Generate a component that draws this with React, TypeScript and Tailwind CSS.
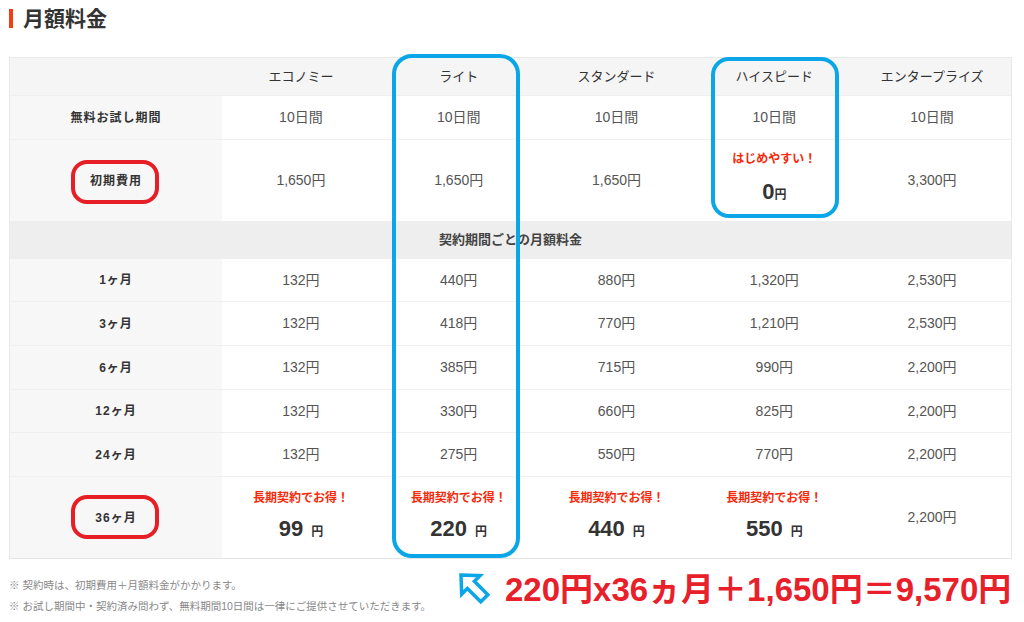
import React from "react";

const plans = ["エコノミー", "ライト", "スタンダード", "ハイスピード", "エンタープライズ"];
const monthly: [string, string[]][] = [
  ["1ヶ月", ["132円", "440円", "880円", "1,320円", "2,530円"]],
  ["3ヶ月", ["132円", "418円", "770円", "1,210円", "2,530円"]],
  ["6ヶ月", ["132円", "385円", "715円", "990円", "2,200円"]],
  ["12ヶ月", ["132円", "330円", "660円", "825円", "2,200円"]],
  ["24ヶ月", ["132円", "275円", "550円", "770円", "2,200円"]],
];
const heights = ["h-[43px]", "h-[44px]", "h-[44px]", "h-[43px]", "h-[44px]"];

const rowGrid = "grid grid-cols-[212px_repeat(5,minmax(0,1fr))] border-b border-[#efefef]";
const labelCell = "flex items-center justify-center bg-[#f7f7f7] text-[12px] font-bold text-[#333] tracking-[1px]";
const dataCell = "flex items-center justify-center bg-white text-[14px] text-[#555]";

function Deal({ price }: { price: string }) {
  return (
    <div className="flex flex-col items-center gap-[10px]">
      <div className="text-[12px] font-bold leading-[16px] text-[#f52a0a]">長期契約でお得！</div>
      <div className="flex items-baseline leading-[26px] text-[#333]">
        <span className="text-[22px] font-bold">{price}</span>
        <span className="ml-[8px] text-[12px] font-bold">円</span>
      </div>
    </div>
  );
}

export default function App() {
  return (
    <div className="relative w-[1024px] h-[622px] overflow-hidden bg-white font-[Liberation_Sans,Noto_Sans_CJK_JP,sans-serif]">
      <div className="flex items-center pl-[9px] pt-[8px] h-[28px]">
        <div className="w-[4px] h-[19px] bg-[#f33d12]" />
        <div className="ml-[10px] text-[21px] font-bold leading-[21px] text-[#333]">月額料金</div>
      </div>

      <div className="ml-[9px] mt-[29px] w-[1003px] border border-[#e8e8e8] border-b-[#e4e4e4]">
        {/* header */}
        <div className={`${rowGrid} h-[38px] bg-[#f5f5f5]`}>
          <div />
          {plans.map((p) => (
            <div key={p} className="flex items-center justify-center text-[13px] text-[#333]">
              {p}
            </div>
          ))}
        </div>
        {/* trial */}
        <div className={`${rowGrid} h-[44px]`}>
          <div className={labelCell}>無料お試し期間</div>
          {plans.map((p) => (
            <div key={p} className={dataCell}>10日間</div>
          ))}
        </div>
        {/* initial */}
        <div className={`${rowGrid} h-[81px] border-b-0`}>
          <div className={labelCell}>初期費用</div>
          <div className={dataCell}>1,650円</div>
          <div className={dataCell}>1,650円</div>
          <div className={dataCell}>1,650円</div>
          <div className={dataCell}>
            <div className="flex flex-col items-center gap-[12px] -mt-[2px]">
              <div className="text-[12px] font-bold leading-[16px] text-[#f52a0a]">はじめやすい！</div>
              <div className="flex items-baseline leading-[26px] text-[#333]">
                <span className="text-[22px] font-bold">0</span>
                <span className="text-[12px] font-bold">円</span>
              </div>
            </div>
          </div>
          <div className={dataCell}>3,300円</div>
        </div>
        {/* section */}
        <div className="flex h-[38px] items-center justify-center bg-[#eeeeee] text-[13px] font-semibold text-[#444]">
          契約期間ごとの月額料金
        </div>
        {monthly.map(([label, vals], i) => (
          <div key={label} className={`${rowGrid} ${heights[i]}`}>
            <div className={labelCell}>{label}</div>
            {vals.map((v, j) => (
              <div key={j} className={dataCell}>{v}</div>
            ))}
          </div>
        ))}
        {/* 36 months */}
        <div className={`${rowGrid} h-[81px] border-b-0`}>
          <div className={labelCell}>36ヶ月</div>
          <div className={dataCell}><Deal price="99" /></div>
          <div className={dataCell}><Deal price="220" /></div>
          <div className={dataCell}><Deal price="440" /></div>
          <div className={dataCell}><Deal price="550" /></div>
          <div className={dataCell}>2,200円</div>
        </div>
      </div>

      {/* bottom area */}
      <div className="flex items-start pl-[9px] mt-[16px]">
        <div className="w-[440px] text-[10.5px] leading-[21px] text-[#888]">
          <div>※ 契約時は、初期費用＋月額料金がかかります。</div>
          <div>※ お試し期間中・契約済み問わず、無料期間10日間は一律にご提供させていただきます。</div>
        </div>
        <svg width="40" height="40" viewBox="0 0 40 40" className="ml-[4px] -mt-[8px]">
          <g transform="rotate(-45 20 20)">
            <polygon
              points="20,3 33,17 25,17 25,36 15,36 15,17 7,17"
              fill="white"
              stroke="#0aa6e8"
              strokeWidth="3.5"
              strokeLinejoin="miter"
            />
          </g>
        </svg>
        <div className="ml-[12px] -mt-[3px] text-[33px] font-bold leading-[36px] text-[#e8202a] whitespace-nowrap">
          220円x36ヵ月＋1,650円＝9,570円
        </div>
      </div>

      {/* overlays */}
      <div className="absolute left-[392px] top-[54px] w-[128px] h-[504px] rounded-[20px] border-[4px] border-[#0aa6e8]" />
      <div className="absolute left-[711px] top-[57px] w-[128px] h-[161px] rounded-[18px] border-[4px] border-[#0aa6e8]" />
      <div className="absolute left-[71px] top-[160px] w-[88px] h-[44px] rounded-[16px] border-[4px] border-[#e61e25]" />
      <div className="absolute left-[71px] top-[495px] w-[88px] h-[44px] rounded-[16px] border-[4px] border-[#e61e25]" />
    </div>
  );
}
